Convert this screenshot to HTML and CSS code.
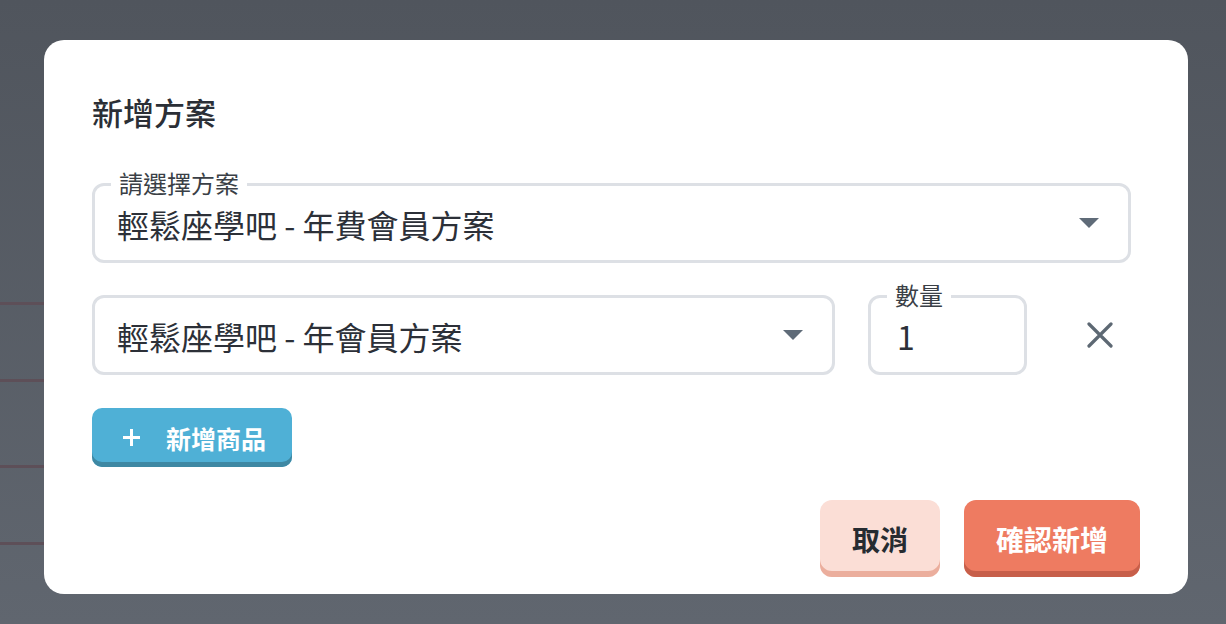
FILE: index.html
```html
<!DOCTYPE html>
<html lang="zh-Hant">
<head>
  <meta charset="UTF-8" />
  <meta name="viewport" content="width=device-width, initial-scale=1.0"/>
  <title>新增方案</title>
  <link rel="stylesheet" href="styles.css">
</head>
<body>
  <div class="overlay">
    <div class="modal">
      <h2 class="modal-title">新增方案</h2>

      <div class="field field-plan">
        <span class="field-label">請選擇方案</span>
        <span class="field-value">輕鬆座學吧 - 年費會員方案</span>
        <span class="caret"></span>
      </div>

      <div class="item-row">
        <div class="field field-product">
          <span class="field-value">輕鬆座學吧 - 年會員方案</span>
          <span class="caret"></span>
        </div>
        <div class="field field-qty">
          <span class="field-label">數量</span>
          <span class="field-value">1</span>
        </div>
        <button class="remove-btn" aria-label="移除">
          <svg width="26" height="26" viewBox="0 0 26 26">
            <path d="M2 2L24 24M24 2L2 24" stroke="#5d6873" stroke-width="3.2" stroke-linecap="round" fill="none"/>
          </svg>
        </button>
      </div>

      <button class="add-btn">
        <svg width="19" height="19" viewBox="0 0 19 19">
          <path d="M9.5 1V18M1 9.5H18" stroke="#fff" stroke-width="3" fill="none"/>
        </svg>
        <span>新增商品</span>
      </button>

      <div class="modal-actions">
        <button class="btn btn-cancel">取消</button>
        <button class="btn btn-confirm">確認新增</button>
      </div>
    </div>
  </div>
</body>
</html>
```

FILE: styles.css
```css
* {
  box-sizing: border-box;
  font-family: "Noto Sans CJK TC", "Noto Sans", sans-serif;
}

body {
  margin: 0;
  height: 624px;
  overflow: hidden;
  background:
    linear-gradient(#5d4f58, #5d4f58) 0 302px / 44px 3px no-repeat,
    linear-gradient(#5d4f58, #5d4f58) 0 379px / 44px 3px no-repeat,
    linear-gradient(#5d4f58, #5d4f58) 0 465px / 44px 3px no-repeat,
    linear-gradient(#5d4f58, #5d4f58) 0 542px / 44px 3px no-repeat,
    linear-gradient(to bottom, #50555d, #60666f);
}

.overlay {
  padding: 40px 0 0 44px;
}

.modal {
  width: 1144px;
  height: 554px;
  background: #fff;
  border-radius: 20px;
  padding: 52px 48px 0 48px;
}

.modal-title {
  margin: 0 0 51px;
  font-size: 31px;
  line-height: 40px;
  font-weight: 500;
  color: #2b2f36;
}

.field {
  position: relative;
  height: 80px;
  border: 3px solid #dde0e5;
  border-radius: 12px;
  display: flex;
  align-items: center;
  padding: 2px 29px 0 22px;
}

.field-plan {
  margin-right: 9px;
}

.field-label {
  position: absolute;
  top: -17px;
  left: 16px;
  padding: 0 8px;
  background: #fff;
  font-size: 24px;
  line-height: 28px;
  color: #3a3f46;
}

.field-value {
  flex: 1;
  font-size: 32px;
  line-height: 40px;
  color: #2c3038;
}

.caret {
  width: 0;
  height: 0;
  margin-top: -2px;
  border-left: 10px solid transparent;
  border-right: 10px solid transparent;
  border-top: 10px solid #5f6b78;
}

.item-row {
  display: flex;
  gap: 33px;
  margin-top: 32px;
}

.field-product {
  flex: 1;
}

.field-qty {
  width: 159px;
  padding-left: 26px;
}

.remove-btn {
  width: 80px;
  border: none;
  background: none;
  padding: 0;
  display: flex;
  align-items: center;
  justify-content: center;
  cursor: pointer;
}

.add-btn {
  margin-top: 33px;
  height: 59px;
  width: 200px;
  border: none;
  border-radius: 10px;
  background: #4fb0d6;
  box-shadow: inset 0 -5px 0 #3e88a3;
  color: #fff;
  display: flex;
  align-items: center;
  gap: 25px;
  padding: 0 0 0 30px;
  font-size: 25px;
  font-weight: 700;
  cursor: pointer;
}

.modal-actions {
  display: flex;
  justify-content: flex-end;
  gap: 24px;
  margin-top: 33px;
}

.btn {
  height: 77px;
  border: none;
  border-radius: 12px;
  font-size: 28px;
  font-weight: 700;
  cursor: pointer;
}

.btn-cancel {
  width: 120px;
  background: #fbded6;
  box-shadow: inset 0 -6px 0 #ebae9d;
  color: #262b31;
}

.btn-confirm {
  width: 176px;
  background: #ee7b61;
  box-shadow: inset 0 -6px 0 #c75f4a;
  color: #fff;
}
```
